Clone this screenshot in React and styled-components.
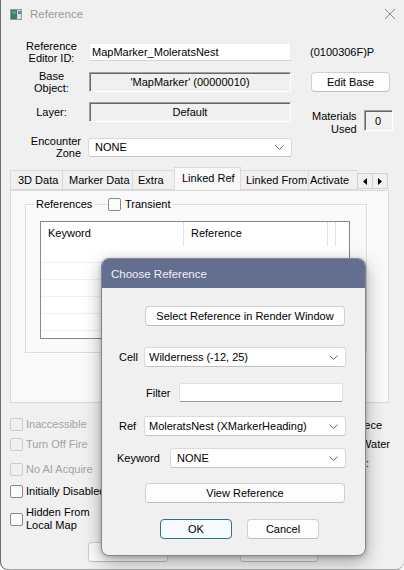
import React from 'react'
import styled, { createGlobalStyle } from 'styled-components'

const GlobalStyle = createGlobalStyle`
  html, body { margin: 0; padding: 0; background: #ffffff; }
  body { font-family: "Liberation Sans", Arial, sans-serif; font-size: 11px; color: #000; }
  * { box-sizing: border-box; }
`

const Window = styled.div`
  position: relative;
  width: 404px;
  height: 570px;
  background: #f0f0f0;
  box-shadow: inset 1px 0 0 #6f6f6f, inset 0 -1px 0 #a8a8a8;
  border-radius: 0 0 8px 8px;
  overflow: hidden;
  display: flex;
  flex-direction: column;
`

const TitleBar = styled.div`
  height: 28px;
  flex-shrink: 0;
  display: flex;
  align-items: center;
  padding: 0 8px 0 10px;
  gap: 8px;
  color: #9b9b9b;
  font-size: 11.5px;
`

const TitleText = styled.span`
  flex: 1;
`

const Form = styled.div`
  display: flex;
  flex-direction: column;
  padding-top: 9px;
`

const Row = styled.div`
  display: flex;
  align-items: center;
  height: ${({ $h }) => $h}px;
`

const Label = styled.div`
  width: ${({ $w }) => $w || 67}px;
  margin-left: ${({ $ml }) => ($ml === undefined ? 18 : $ml)}px;
  text-align: ${({ $align }) => $align || 'center'};
  line-height: 12.5px;
`

const TextInput = styled.div`
  width: 202px;
  height: 18px;
  margin-left: 4px;
  background: #fff;
  border: 1px solid #ececec;
  border-bottom-color: #d4d4d4;
  padding: 0 2px;
  display: flex;
  align-items: center;
`

const Sunken = styled.div`
  width: ${({ $w }) => $w || 202}px;
  height: ${({ $h }) => $h || 20}px;
  margin-left: ${({ $ml }) => ($ml === undefined ? 4 : $ml)}px;
  background: #f0f0f0;
  border-top: 1px solid #a0a0a0;
  border-left: 1px solid #a0a0a0;
  border-right: 1px solid #ffffff;
  border-bottom: 1px solid #ffffff;
  box-shadow: inset 1px 1px 0 #696969;
  display: flex;
  align-items: center;
  justify-content: center;
`

const Combo = styled.div`
  width: ${({ $w }) => $w}px;
  height: ${({ $h }) => $h || 20}px;
  margin-left: ${({ $ml }) => $ml || 0}px;
  background: #fff;
  border: 1px solid #dadada;
  border-bottom-color: #c4c4c4;
  border-radius: 3px;
  display: flex;
  align-items: center;
  justify-content: space-between;
  padding: 0 7px 0 ${({ $pl }) => $pl || 4}px;
`

const Side = styled.div`
  margin-left: 19px;
  display: flex;
  align-items: center;
`

const Button = styled.div`
  width: ${({ $w }) => $w}px;
  height: 20px;
  flex-shrink: 0;
  margin-left: ${({ $ml }) => $ml || 0}px;
  background: ${({ $focus }) => ($focus ? '#f7fbfd' : '#fdfdfd')};
  border: 1px solid ${({ $focus }) => ($focus ? '#2f6f8c' : '#d0d0d0')};
  border-bottom-color: ${({ $focus }) => ($focus ? '#2f6f8c' : '#bdbdbd')};
  border-radius: 4px;
  display: flex;
  align-items: center;
  justify-content: center;
`

const Materials = styled.div`
  align-self: flex-start;
  margin-top: 13px;
  margin-left: 21px;
  display: flex;
  align-items: flex-start;
  gap: 7px;
`

const MaterialsLabel = styled.div`
  text-align: right;
  line-height: 12.5px;
`

const TabStrip = styled.div`
  display: flex;
  align-items: flex-end;
  height: 23px;
  margin-left: 10px;
`

const TabViewport = styled.div`
  width: 347px;
  height: 23px;
  display: flex;
  align-items: flex-end;
  overflow: hidden;
  position: relative;
`

const Tab = styled.div`
  flex-shrink: 0;
  width: ${({ $w }) => $w}px;
  height: ${({ $active }) => ($active ? 24 : 20)}px;
  margin-left: ${({ $first }) => ($first ? 0 : -1)}px;
  margin-bottom: ${({ $active }) => ($active ? -1 : 0)}px;
  background: ${({ $active }) => ($active ? '#f9f9f9' : '#f0f0f0')};
  border: 1px solid #d9d9d9;
  border-bottom: ${({ $active }) => ($active ? 'none' : '1px solid #d9d9d9')};
  position: relative;
  z-index: ${({ $active }) => ($active ? 2 : 1)};
  display: flex;
  align-items: center;
  padding-left: ${({ $pl }) => $pl}px;
  padding-bottom: ${({ $active }) => ($active ? 4 : 0)}px;
  white-space: nowrap;
`

const ArrowBtn = styled.div`
  width: 16px;
  height: 16px;
  margin-bottom: 1px;
  margin-left: ${({ $ml }) => $ml || 0}px;
  border: 1px solid #d0d0d0;
  background: #f0f0f0;
  display: flex;
  align-items: center;
  justify-content: center;
`

const Panel = styled.div`
  margin-left: 10px;
  width: 379px;
  height: 213px;
  flex-shrink: 0;
  background: #f9f9f9;
  border: 1px solid #d9d9d9;
  padding: 13px 0 0 14px;
`

const GroupBox = styled.div`
  position: relative;
  width: 342px;
  height: 149px;
  border: 1px solid #dcdcdc;
  box-shadow: inset 1px 1px 0 #ffffff, 1px 1px 0 #ffffff;
  padding: 16px 0 0 14px;
`

const GroupLegend = styled.span`
  position: absolute;
  top: -7px;
  left: 7px;
  padding: 0 3px;
  background: #f9f9f9;
  line-height: 13px;
`

const Transient = styled.label`
  position: absolute;
  top: -7px;
  left: 82px;
  padding-right: 3px;
  background: #f9f9f9;
  display: flex;
  align-items: center;
  gap: 4px;
  line-height: 13px;
`

const ListView = styled.div`
  width: 310px;
  height: 118px;
  background: #fff;
  border: 1px solid #828790;
  overflow: hidden;
`

const ListHeader = styled.div`
  display: grid;
  grid-template-columns: 143px 144px 4px 1fr;
  height: 24px;
`

const HeaderCell = styled.div`
  border-right: 1px solid #e5e5e5;
  padding-left: 7px;
  display: flex;
  align-items: center;
  padding-bottom: 2px;
`

const ListRow = styled.div`
  height: 17px;
  border-bottom: 1px solid #f0f0f0;
`

const Bottom = styled.div`
  display: flex;
  justify-content: space-between;
  margin-top: 11px;
  width: 404px;
`

const CheckCol = styled.div`
  display: flex;
  flex-direction: column;
  margin-left: 10px;
`

const CheckItem = styled.div`
  display: flex;
  align-items: center;
  gap: 3px;
  min-height: 20px;
  margin-top: ${({ $mt }) => $mt || 0}px;
  color: ${({ $disabled }) => ($disabled ? '#a3a3a3' : '#000')};
  line-height: 13px;
  white-space: nowrap;
`

const Box = styled.span`
  width: 13px;
  height: 13px;
  flex-shrink: 0;
  border: 1px solid ${({ $disabled }) => ($disabled ? '#cccccc' : '#8a8a8a')};
  background: ${({ $disabled }) => ($disabled ? '#f0f0f0' : '#fbfbfb')};
  border-radius: 2px;
`

const ButtonRow = styled.div`
  display: flex;
  margin-top: 10px;
  margin-left: 88px;
`

const RightCol = styled.div`
  display: flex;
  flex-direction: column;
  align-items: flex-end;
  padding-top: 5px;
`

const RightText = styled.div`
  height: ${({ $h }) => $h}px;
  margin-right: ${({ $mr }) => $mr}px;
  white-space: nowrap;
  line-height: 13px;
`

const Dialog = styled.div`
  position: absolute;
  left: 101px;
  top: 258px;
  width: 265px;
  height: 298px;
  border-radius: 8px;
  background: #f0f0f0;
  border: 1px solid #7f879b;
  box-shadow: 0 6px 18px rgba(0, 0, 0, 0.32), 0 1px 4px rgba(0, 0, 0, 0.2);
  overflow: hidden;
  display: flex;
  flex-direction: column;
  z-index: 10;
`

const DialogTitle = styled.div`
  height: 29px;
  background: #646f8f;
  color: #eef0f5;
  font-size: 11.5px;
  padding-left: 9px;
  display: flex;
  align-items: center;
  flex-shrink: 0;
`

const DialogBody = styled.div`
  display: flex;
  flex-direction: column;
`

const DRow = styled.div`
  display: flex;
  align-items: center;
  margin-top: ${({ $mt }) => $mt}px;
  padding-left: ${({ $pl }) => $pl}px;
`

const DLabel = styled.div`
  width: ${({ $w }) => $w}px;
  flex-shrink: 0;
`

const FilterInput = styled.div`
  width: 164px;
  height: 19px;
  background: #fff;
  border: 1px solid #e0e0e0;
  border-bottom-color: #9a9a9a;
  border-radius: 2px;
`

const Chevron = () => (
  <svg width="9" height="5" viewBox="0 0 9 5">
    <path d="M0.5 0.5 L4.5 4.5 L8.5 0.5" fill="none" stroke="#6a6a6a" strokeWidth="1" />
  </svg>
)

const AppIcon = () => (
  <svg width="12" height="11" viewBox="0 0 12 11">
    <rect x="0" y="0" width="12" height="11" fill="#d5dde3" />
    <rect x="0.5" y="0.5" width="11" height="10" fill="none" stroke="#8d99a3" />
    <rect x="1" y="1" width="6" height="9" fill="#3f7b6d" />
    <rect x="2" y="2" width="4" height="3" fill="#5d9a86" />
    <rect x="8" y="2" width="3" height="3" fill="#6b81a0" />
  </svg>
)

const CloseIcon = () => (
  <svg width="12" height="12" viewBox="0 0 12 12">
    <path d="M1 1 L11 11 M11 1 L1 11" stroke="#8a8a8a" strokeWidth="1" />
  </svg>
)

const TriLeft = () => (
  <svg width="4" height="7" viewBox="0 0 4 7">
    <path d="M4 0 L0 3.5 L4 7 Z" fill="#000" />
  </svg>
)

const TriRight = () => (
  <svg width="4" height="7" viewBox="0 0 4 7">
    <path d="M0 0 L4 3.5 L0 7 Z" fill="#000" />
  </svg>
)

const tabs = [
  { label: '3D Data', w: 53, pl: 7 },
  { label: 'Marker Data', w: 71, pl: 6 },
  { label: 'Extra', w: 43, pl: 5 },
  { label: 'Linked Ref', w: 67, pl: 7, active: true },
  { label: 'Linked From', w: 69, pl: 5 },
  { label: 'Activate', w: 60, pl: 1 },
]

const checks = [
  { label: 'Inaccessible', disabled: true, mt: 0 },
  { label: 'Turn Off Fire', disabled: true, mt: 0 },
  { label: 'No AI Acquire', disabled: true, mt: 5 },
  { label: 'Initially Disabled', disabled: false, mt: 2 },
  { label: ['Hidden From', 'Local Map'], disabled: false, mt: 5 },
]

export default function App() {
  return (
    <>
      <GlobalStyle />
      <Window>
        <TitleBar>
          <AppIcon />
          <TitleText>Reference</TitleText>
          <CloseIcon />
        </TitleBar>

        <Form>
          <Row $h={30}>
            <Label>Reference<br />Editor ID:</Label>
            <TextInput>MapMarker_MoleratsNest</TextInput>
            <Side>(0100306F)P</Side>
          </Row>
          <Row $h={30}>
            <Label>Base<br />Object:</Label>
            <Sunken>'MapMarker' (00000010)</Sunken>
            <Button $w={79} $ml={20}>Edit Base</Button>
          </Row>
          <Row $h={30}>
            <Label>Layer:</Label>
            <Sunken>Default</Sunken>
            <Materials>
              <MaterialsLabel>Materials<br />Used</MaterialsLabel>
              <Sunken $w={29} $h={21} $ml={0}>0</Sunken>
            </Materials>
          </Row>
          <Row $h={40}>
            <Label $w={70} $ml={11} $align="right">Encounter<br />Zone</Label>
            <Combo $w={204} $h={19} $ml={7} $pl={6}>
              <span>NONE</span>
              <Chevron />
            </Combo>
          </Row>
        </Form>

        <TabStrip>
          <TabViewport>
            {tabs.map((t, i) => (
              <Tab key={t.label} $w={t.w} $pl={t.pl} $active={t.active} $first={i === 0}>
                {t.label}
              </Tab>
            ))}
          </TabViewport>
          <ArrowBtn><TriLeft /></ArrowBtn>
          <ArrowBtn $ml={-1}><TriRight /></ArrowBtn>
        </TabStrip>

        <Panel>
          <GroupBox>
            <GroupLegend>References</GroupLegend>
            <Transient>
              <Box />
              Transient
            </Transient>
            <ListView>
              <ListHeader>
                <HeaderCell>Keyword</HeaderCell>
                <HeaderCell>Reference</HeaderCell>
                <HeaderCell />
                <div />
              </ListHeader>
              {[0, 1, 2, 3, 4, 5].map((r) => (
                <ListRow key={r} />
              ))}
            </ListView>
          </GroupBox>
        </Panel>

        <Bottom>
          <CheckCol>
            {checks.map((c) => (
              <CheckItem key={String(c.label)} $disabled={c.disabled} $mt={c.mt}>
                <Box $disabled={c.disabled} />
                <span>
                  {Array.isArray(c.label) ? (
                    <>
                      {c.label[0]}
                      <br />
                      {c.label[1]}
                    </>
                  ) : (
                    c.label
                  )}
                </span>
              </CheckItem>
            ))}
          </CheckCol>
          <RightCol>
            <RightText $h={19} $mr={22}>Ground Piece</RightText>
            <RightText $h={19} $mr={14}>Reflected By Auto Water</RightText>
            <RightText $h={19} $mr={35}>Location Ref Type:</RightText>
          </RightCol>
        </Bottom>
        <ButtonRow>
          <Button $w={80}>OK</Button>
          <Button $w={78} $ml={72}>Cancel</Button>
        </ButtonRow>

        <Dialog>
          <DialogTitle>Choose Reference</DialogTitle>
          <DialogBody>
            <DRow $mt={18} $pl={43}>
              <Button $w={200}>Select Reference in Render Window</Button>
            </DRow>
            <DRow $mt={21} $pl={17}>
              <DLabel $w={25}>Cell</DLabel>
              <Combo $w={202}>
                <span>Wilderness (-12, 25)</span>
                <Chevron />
              </Combo>
            </DRow>
            <DRow $mt={16} $pl={44}>
              <DLabel $w={33}>Filter</DLabel>
              <FilterInput />
            </DRow>
            <DRow $mt={14} $pl={17}>
              <DLabel $w={25}>Ref</DLabel>
              <Combo $w={202}>
                <span>MoleratsNest (XMarkerHeading)</span>
                <Chevron />
              </Combo>
            </DRow>
            <DRow $mt={12} $pl={15}>
              <DLabel $w={53}>Keyword</DLabel>
              <Combo $w={176} $pl={6}>
                <span>NONE</span>
                <Chevron />
              </Combo>
            </DRow>
            <DRow $mt={15} $pl={43}>
              <Button $w={200}>View Reference</Button>
            </DRow>
            <DRow $mt={16} $pl={58}>
              <Button $w={72} $focus>OK</Button>
              <Button $w={72} $ml={15}>Cancel</Button>
            </DRow>
          </DialogBody>
        </Dialog>
      </Window>
    </>
  )
}
